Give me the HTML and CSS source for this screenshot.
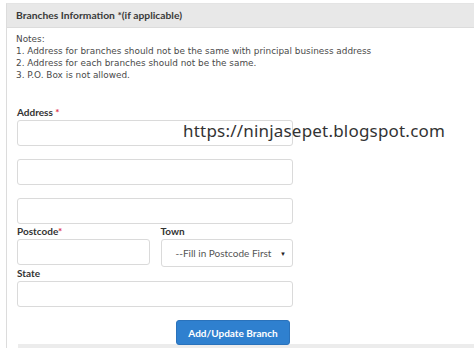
FILE: index.html
```html
<!DOCTYPE html>
<html lang="en">
<head>
    <meta charset="UTF-8">
    <meta name="viewport" content="width=device-width, initial-scale=1.0">
    <title>Branches Information</title>
    <link rel="stylesheet" href="styles.css">
</head>
<body>
    <div class="panel">
        <div class="panel-heading">Branches Information *(if applicable)</div>

        <div class="panel-body">
            <div class="notes">
                Notes:<br>
                1. Address for branches should not be the same with principal business address<br>
                2. Address for each branches should not be the same.<br>
                3. P.O. Box is not allowed.
            </div>

            <form class="branch-form">
                <label class="field-label">Address <span class="req">*</span></label>
                <input type="text" class="field">
                <input type="text" class="field spaced">
                <input type="text" class="field spaced">

                <div class="field-row">
                    <div class="field-col">
                        <label class="field-label">Postcode<span class="req">*</span></label>
                        <input type="text" class="field">
                    </div>
                    <div class="field-col">
                        <label class="field-label">Town</label>
                        <div class="select">
                            <span>--Fill in Postcode First</span>
                            <span class="caret">&#9660;</span>
                        </div>
                    </div>
                </div>

                <label class="field-label">State</label>
                <input type="text" class="field">

                <div class="actions">
                    <button type="button" class="btn-primary">Add/Update Branch</button>
                </div>
            </form>
        </div>

        <div class="panel-next"></div>
    </div>

    <div class="watermark">https://ninjasepet.blogspot.com</div>
</body>
</html>
```

FILE: styles.css
```css
* {
    margin: 0;
    padding: 0;
    box-sizing: border-box;
}

body {
    font-family: Lato, 'Open Sans', sans-serif;
    background: white;
    color: #333;
    padding: 3px 0 0 6px;
    height: 348px;
    overflow: hidden;
}

.panel {
    border-left: 1px solid #dcdcdc;
    border-top: 1px solid #e4e4e4;
}

.panel-heading {
    background: #e8e8e8;
    border-bottom: 1px solid #dcdcdc;
    height: 24px;
    line-height: 23px;
    padding-left: 9px;
    font-size: 10.3px;
    font-weight: bold;
    color: #3a3a3a;
}

.panel-body {
    padding: 5px 0 0 9px;
}

.notes {
    font-family: 'DejaVu Sans', sans-serif;
    font-size: 8.9px;
    line-height: 12px;
    color: #4a4a4a;
}

.branch-form {
    width: 276px;
    margin-left: 1px;
    margin-top: 25px;
}

.field-label {
    display: block;
    font-size: 10px;
    font-weight: bold;
    line-height: 12px;
    color: #333;
    margin-bottom: 2px;
}

.req {
    color: #e0334a;
}

.field {
    display: block;
    width: 100%;
    height: 26px;
    border: 1px solid #dadada;
    border-radius: 3px;
    background: white;
}

.field.spaced {
    margin-top: 13px;
}

.field-row {
    display: flex;
    gap: 11px;
    margin-top: 1px;
}

.field-col {
    flex: 1;
}

.select {
    display: flex;
    align-items: center;
    justify-content: space-between;
    height: 28px;
    padding: 0 6px 0 14px;
    border: 1px solid #dadada;
    border-radius: 3px;
    font-size: 10px;
    color: #555;
}

.caret {
    font-size: 6px;
    color: #222;
}

.actions {
    display: flex;
    justify-content: flex-end;
    padding-right: 3px;
    margin-top: 13px;
}

.btn-primary {
    width: 114px;
    height: 25px;
    background: #2f80cf;
    border: 1px solid #2a72bb;
    border-radius: 3px;
    color: white;
    font-family: Lato, sans-serif;
    font-size: 10px;
    font-weight: bold;
}

.panel-next {
    height: 6px;
    margin-left: 11px;
    background: #ececec;
    margin-top: -1px;
}

.watermark {
    position: absolute;
    left: 183px;
    top: 119px;
    font-family: 'Noto Sans', sans-serif;
    font-size: 17px;
    color: #333;
    letter-spacing: 0.2px;
}
```
